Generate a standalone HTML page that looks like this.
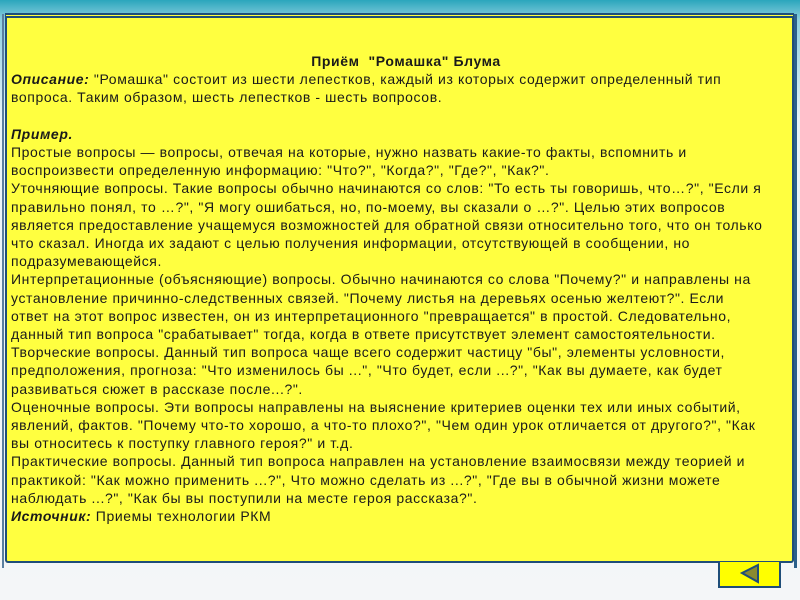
<!DOCTYPE html>
<html><head><meta charset="utf-8"><style>
html,body{margin:0;padding:0}
body{width:800px;height:600px;position:relative;overflow:hidden;background:linear-gradient(180deg,#2aa6bc 0px,#8fd0e0 20px,#e8f4f8 120px,#f4f6f8 600px);font-family:"Liberation Sans",Arial,sans-serif}
.frame{position:absolute;left:2px;top:14px;width:795px;height:554px;border-left:2px solid #5a7fa0;border-right:3px solid #2b5f8a;box-sizing:border-box}
.box{position:absolute;left:5px;top:13px;width:789px;height:550px;background:#ffff40;border:2px solid #1f4e79;border-top:5px double #1f4e79;box-sizing:border-box;border-radius:0 0 3px 3px}
.txt{position:absolute;left:11px;top:52px;width:770px;font-size:14px;letter-spacing:0.6px;line-height:18.2px;color:#1a1a1a}
.t{text-align:center;font-weight:bold;padding-left:20px}
.btn{position:absolute;left:718px;top:562px;width:63px;height:26px;background:#ffff00;border:2px solid #1f4e79;box-sizing:border-box;border-top:none}
</style></head><body>
<div class="frame"></div>
<div class="box"></div>
<div class="txt">
<div class="t">Приём&nbsp; "Ромашка" Блума</div>
<b><i>Описание:</i></b> "Ромашка" состоит из шести лепестков, каждый из которых содержит определенный тип вопроса. Таким образом, шесть лепестков - шесть вопросов.<br><br>
<b><i>Пример.</i></b><br>
Простые вопросы — вопросы, отвечая на которые, нужно назвать какие-то факты, вспомнить и воспроизвести определенную информацию: "Что?", "Когда?", "Где?", "Как?".<br>
Уточняющие вопросы. Такие вопросы обычно начинаются со слов: "То есть ты говоришь, что…?", "Если я правильно понял, то …?", "Я могу ошибаться, но, по-моему, вы сказали о …?". Целью этих вопросов является предоставление учащемуся возможностей для обратной связи относительно того, что он только что сказал. Иногда их задают с целью получения информации, отсутствующей в сообщении, но подразумевающейся.<br>
Интерпретационные (объясняющие) вопросы. Обычно начинаются со слова "Почему?" и направлены на установление причинно-следственных связей. "Почему листья на деревьях осенью желтеют?". Если<br>ответ на этот вопрос известен, он из интерпретационного "превращается" в простой. Следовательно,<br>данный тип вопроса "срабатывает" тогда, когда в ответе присутствует элемент самостоятельности.<br>
Творческие вопросы. Данный тип вопроса чаще всего содержит частицу "бы", элементы условности, предположения, прогноза: "Что изменилось бы ...", "Что будет, если ...?", "Как вы думаете, как будет развиваться сюжет в рассказе после...?".<br>
Оценочные вопросы. Эти вопросы направлены на выяснение критериев оценки тех или иных событий, явлений, фактов. "Почему что-то хорошо, а что-то плохо?", "Чем один урок отличается от другого?", "Как<br>вы относитесь к поступку главного героя?" и т.д.<br>
Практические вопросы. Данный тип вопроса направлен на установление взаимосвязи между теорией и практикой: "Как можно применить ...?", Что можно сделать из ...?", "Где вы в обычной жизни можете наблюдать ...?", "Как бы вы поступили на месте героя рассказа?".<br>
<b><i>Источник:</i></b> Приемы технологии РКМ
</div>
<div class="btn"><svg width="59" height="24" style="position:absolute;left:0;top:0"><polygon points="22,11 38,3 38,20" fill="#8a8a30" stroke="#1f4e79" stroke-width="2"/></svg></div>
</body></html>
